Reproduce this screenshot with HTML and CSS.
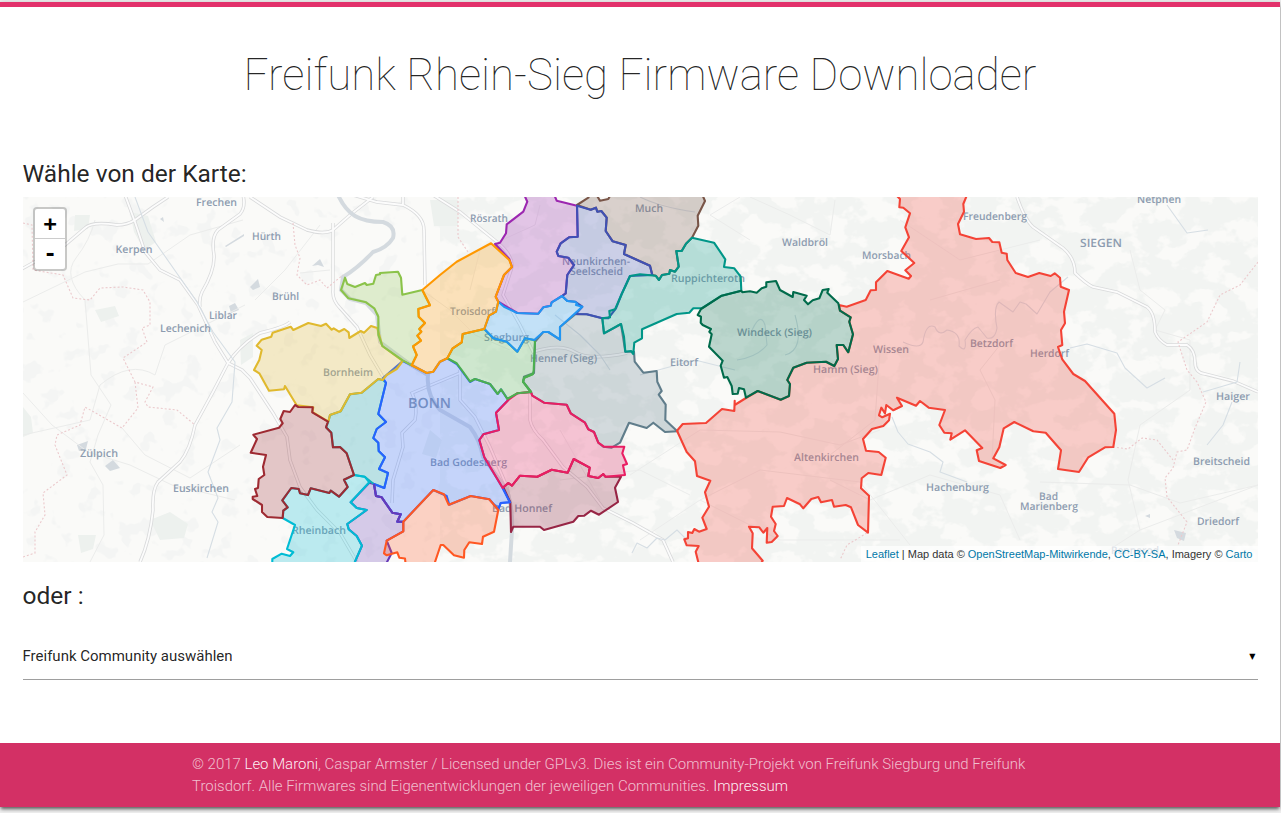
FILE: index.html
```html
<!DOCTYPE html>
<html lang="de">
<head>
<meta charset="utf-8">
<title>Freifunk Rhein-Sieg Firmware Downloader</title>
<link rel="stylesheet" href="styles.css">
</head>
<body>
<div class="page">
  <header class="header"><h1 class="title">Freifunk Rhein-Sieg Firmware Downloader</h1></header>
  <main class="main">
    <h2 class="heading">Wähle von der Karte:</h2>
    <div class="map">
      <svg class="map-canvas" viewBox="23 197 1235 365" width="1235" height="365">
        <defs>
          <filter id="woods" x="0" y="0" width="100%" height="100%" color-interpolation-filters="sRGB">
            <feTurbulence type="fractalNoise" baseFrequency="0.035 0.045" numOctaves="4" seed="8"/>
            <feColorMatrix values="0 0 0 0 .949  0 0 0 0 .957  0 0 0 0 .949  12 0 0 0 -5.1"/>
          </filter>
          <filter id="fields" x="0" y="0" width="100%" height="100%" color-interpolation-filters="sRGB">
            <feTurbulence type="fractalNoise" baseFrequency="0.05" numOctaves="3" seed="21"/>
            <feColorMatrix values="0 0 0 0 .957  0 0 0 0 .961  0 0 0 0 .957  14 0 0 0 -8.4"/>
          </filter>
          <g id="motorways">
            <path d="M125 195L135 222 145 252 160 270 180 280 198 305 215 342 228 363 242 370 250 378 273 413 287 437 290 460 300 487 317 510 340 533 357 562"/>
            <path d="M20 270L65 245 85 228Q92 221 117 225 127 225 135 220L153 207 168 197"/>
            <path d="M243 195Q246 207 240 214L218 230Q211 237 214 255 215 270 202 292 199 298 200 307"/>
            <path d="M290 322Q285 327 260 333 240 345 228 363L213 392 195 425Q190 450 180 462L158 482Q152 490 153 510 150 540 140 562"/>
            <path d="M250 197L280 217 307 230Q325 235 333 230L350 215 373 197"/>
            <path d="M333 223V290Q332 300 340 308L357 327 370 355 383 377"/>
            <path d="M353 195L377 202 403 205Q424 215 424 230L425 285M403 197V205M433 195L460 212 497 242Q513 255 512 267L503 295 520 325 533 352Q560 343 575 352T627 353"/>
            <path d="M460 373L412 393Q418 405 415 420L402 433 403 447 393 480 392 503"/>
            <path d="M460 370V400L475 417 490 447 507 487 512 513"/>
            <path d="M530 393V420Q532 430 543 440L563 467 587 487 603 508 633 523 663 540 673 562"/>
            <path d="M1017 197Q1025 220 1033 227L1063 248Q1075 258 1075 273 1085 283 1093 287L1117 292 1147 307Q1155 313 1155 332 1158 340 1167 345H1187Q1195 350 1195 362 1195 373 1205 374L1233 381 1258 392"/>
          </g>
          <g id="areas">
            <polygon class="c-purple2" points="369.3,482.7 350.7,502.3 356.7,508 366.7,510 347.3,524 348.7,529.3 356.7,536 362,545.7 354,564 386,564 391.7,553 386.7,540.7 403.3,531.3 403.3,521.7 397.3,521.7 400.7,514.3 392.3,512.7 381.7,497.3 376,496 374,484"/>
            <polygon class="c-alfter" points="328.3,421.7 330,415 340.7,411.3 350,394.3 361.7,392.7 378.3,379 383,380 386,382.7 378.3,414 386,422 376.7,429 373.3,438 378.3,442.7 378.7,451 385,457.3 379,469 388,473 384.3,488 373.3,483.7 364.7,476.7 354,475 346.7,453.3 340,447 333,447.3 331.3,432.7 326,427.3"/>
            <polygon class="c-blue" points="386,382.7 383,378 402.7,361 411.7,365.3 426.7,373 433.3,371.7 440,361.7 447.3,358.3 456.7,364 470,382 475,379 490,384 497.7,394 501,389.3 508.3,400 496,412.7 499,430 483.3,434.3 479.3,440 484.3,457.3 502.7,488 510,502.3 500.7,503 498.3,509.3 489.3,499.3 470.7,496 449.3,504.7 446.7,496 433.3,490 403.3,521.7 397.3,521.7 400.7,514.3 392.3,512.7 381.7,497.3 376,496 374,484 384.3,488 388,473 379,469 385,457.3 378.7,451 378.3,442.7 373.3,438 376.7,429 386,422 378.3,414"/>
            <polyline class="c-purple2 open" points="403.3,521.7 397.3,521.7 400.7,514.3 392.3,512.7 381.7,497.3 376,496 374,484"/>
            <polygon class="c-cyan" points="354,475 364.7,476.7 369.3,482.3 350.7,502.3 356.7,508 366.7,510 347.3,524 348.7,529.3 356.7,536 362,545.7 354,564 272.3,564 272.3,559 281.7,553.7 290,556 293.3,552.3 287,549 295,525 282.7,518 283.3,510.7 287.7,507.3 282.3,500.3 291.3,488 298.7,489 300,493.3 308,495 310.7,488.3 329.3,493 330.7,490.7 339,496.7 347.7,487 344,479.7"/>
            <polygon class="c-yellow" points="256.7,345.7 261.7,339.7 271.3,336.7 272.7,332.7 290.7,326.7 293.3,330 308.3,323 321,326 326,323.7 331.7,329.7 333.7,328.3 339,331.7 344.3,329 348.7,332.3 349.3,338 360.7,331 364,332.7 371,326 377.3,328 382.3,346 402.7,361 396.7,369 386.7,375 382.7,380 378.3,379 361.7,392.7 350,394.3 340.7,411.3 330,415 328.3,421.7 312.3,412 313.3,407.3 296.7,405.3 285,386 284,389.3 269,390.7 259.3,373.3 254,370 259.3,360 261.7,350"/>
            <polygon class="c-maroon" points="295,405 298.3,407 312.7,407.3 312.3,412.3 328,421.7 326,427.3 331.3,432.7 333,447.3 340,447 346.7,453.3 354,475 344,479.7 347.7,487 339,496.7 330.7,490.7 329.3,493 310.7,488.3 308,495 300,493.3 298.7,489 291.3,488 282.3,500.3 287.7,507.3 283.3,510.7 282.7,518 267.3,517 262,512 262,505 252.7,499 252.7,496.7 257.3,496 255,489 258,488 258.7,479 264.3,475 263,466.7 266,455 250.7,452.7 257,439 253.3,434.7 279,427.7 282.7,423.3 280.3,419 283.7,411 290,412"/>
            <polygon class="c-lime" points="345,277.7 347.3,284 355,287 365,283 366.7,285 373.3,283.7 376,275 380,274.3 380,273 398,271.7 401,277.7 402.3,294.7 422.3,290 430,305.3 418.3,309 418.7,316.7 425,323 419.3,329 421.3,331.7 417.3,335.7 421,340.7 413,346.3 416.7,355 411.7,365.3 402.7,360.3 382.3,346 378.3,335 378.3,316.7 374.3,308.3 366,302.3 348.3,298.3 341,290"/>
            <polygon class="c-purple" points="524.3,195 527.3,201.7 523.3,211.7 506.7,224.3 506,233.3 500,242.7 495,244 509.3,259 512,267 504,275 495.7,296.7 498.3,301.7 517.3,313 538.3,313.7 543.3,307.3 550.7,305.7 551.7,302.3 562,296 565.7,293.3 567.3,275 574,265 568.3,257.7 558.3,256 556.7,251.7 560.7,243.3 569,237.3 577.7,236.7 577,205.7 556.7,200.7 554.3,195"/>
            <polygon class="c-brown" points="577,205 588.3,197.7 590,194 596,194 600,200.7 608.3,199 611,194 702,194 705,201 697.7,215.7 698.3,225.7 692,237.7 686,243.7 681.7,251 676.3,251 678.7,266.7 675,271.7 670,270 669.3,273.7 662,275 659,280 655.7,275.7 652.3,275 650,265.7 624,254 625.7,245 612.7,241.3 605.7,231 606.7,217.7 601.3,211 597.3,211.7 596,207.7 590.7,209.7"/>
            <polygon class="c-slate" points="634,351.7 634.7,361.7 643.3,372.7 656.7,371 657.3,381.7 661.7,391 658.7,394.7 665.7,404.7 665.3,420 677.3,431.3 665,432 653.3,422.7 646.7,428 629,422.7 620,442.7 611.7,447.7 603.3,446.7 598.3,442.7 594,432 588.3,429.3 585,422.7 570.7,413.3 566.7,404.7 544,402.7 532.3,395.7 531,392 523,381.7 524,376.7 534,373 535,341.7 543.3,332 548.3,332 560,339.7 560,327 575.7,314 586.7,314.3 602.3,318.3 604,333.3 621,324 625.3,351.7"/>
            <polygon class="c-indigo" points="577,205.7 590.7,209.7 596,207.7 597.3,211.7 601.3,211 606.7,217.7 605.7,231 612.7,241.3 625.7,245 624,254 650,265.7 652.3,275 630,276 621.7,294 616,308.3 608.3,318.3 602.3,318.3 586.7,314.3 575.7,314 582.3,306.7 575,301.7 567.3,301 562,296 565.7,293.3 567.3,275 574,265 568.3,257.7 558.3,256 556.7,251.7 560.7,243.3 569,237.3 577.7,236.7"/>
            <polygon class="c-green" points="447.3,358.3 452.7,348.3 461.7,342.3 462.7,334 484.3,329 493.3,338.3 506.7,341.7 517.3,351.7 525,338.3 534,340 535,341.7 533.7,370 533,374 524.3,377.7 523,381.7 531,392 517.3,393.3 507.3,399 501,389.3 497.7,394 490,384 475,379 470,381.5 461.7,370 456.7,363.3"/>
            <polygon class="c-sky" points="484.3,329 489,315.7 496,311.7 498.3,301.7 504,306.7 517.3,313 538.3,313.7 543.3,307.3 550.7,305.7 551.7,302.3 562,296 567.3,301 575,301.7 577.3,303.7 576,305 582.3,306.7 560,327 560,339.7 548.3,332 543.3,332 534.3,340 525,338.3 517.3,351.7 506.7,341.7 493.3,338.3"/>
            <polygon class="c-teal" points="630,276 640,274.3 655.7,275.7 659,280 662,275 669.3,273.7 670,270 675,271.7 678.7,266.7 676.3,251 681.7,251 686,243.7 692,237.7 714,242.7 725.3,259.3 724,267 734.3,268.3 740.7,276.7 741.3,290.7 721.7,295.7 701.7,308.3 693.3,308.3 689.3,312.7 676.7,314 642,329.3 642,338.3 634.3,342.7 633.3,354 631,351 625.3,351.7 624,336.7 621,324 604,333.3 602.3,318.3 610,317.3 609.3,311 615,309.3 621.7,294"/>
            <polygon class="c-orange" points="422.3,290 440,275 456.7,261.7 491,243.3 509.3,260 512,267 504,275 495.7,296.7 498.3,301.7 496,311.7 489,315.7 484.3,329 462.7,334 461.7,342.3 452.7,348.3 447.3,358.3 440,361.7 433.3,371.7 426.7,373 411.7,365.3 416.7,355 413,346.3 421,340.7 417.3,335.7 421.3,331.7 419.3,329 425,323 418.7,316.7 418.3,309 430,305.3"/>
            <polygon class="c-wine" points="503.3,487.3 508.3,483 512,485.7 520,475.7 537.3,476.7 551.7,469.7 567.7,472.7 573.7,459 589.7,467.7 588.3,476 598.3,478 603.3,474 605.3,476.7 621,476.7 615,487.7 618,502 599,514.7 591,510.7 584.3,515.7 578.3,516 573.3,521.7 544,530 540,526.7 513.3,526.7 511,532 510.3,502.3"/>
            <polyline class="c-blue open" points="502.7,488 510,502.3 500.7,503 498.3,509.3"/>
            <polygon class="c-pink" points="502.7,488 484.3,457.3 479.3,440 483.3,434.3 499,430 496,412.7 508.3,400 517.3,393.3 531,392 532.3,395.7 544,402.7 566.7,404.7 570.7,413.3 585,422.7 588.3,429.3 594,432 598.3,442.7 604,446.7 624.3,446.7 622.3,453.3 627,464 623,465.3 625,475 605.3,476.7 603.3,474 598.3,478 588.3,476 589.7,467.7 573.7,459 567.7,472.7 551.7,469.7 537.3,476.7 520,475.7 512,485.7 508.3,483"/>
            <polyline class="c-green open" points="533,374 524.3,377.7 523,381.7 531,392 517.3,393.3 507.3,399"/>
            <polygon class="c-coral" points="433.3,490 444,494.3 448.7,504.7 470.7,496 489.3,499.3 498.3,510 494,531.7 483,536.7 482,544 469.3,542.3 464.3,550 464,557.7 454,555.3 443.3,545 440.7,545 434,565 405.7,565 405,558.5 399.3,557.7 397.3,552.3 386.7,555.3 384,553.3 386.7,540.7 403.3,531.3 403.3,521.7"/>
            <polygon class="c-red" points="896,195 900,199 899.3,207.3 903.3,207.7 910,213.3 905.3,227.3 909,237.3 901.3,251 914.3,263 905.3,270.3 911,276 908.7,278.7 887.3,271 876,282.3 876,290 870.7,290.3 865.7,300 846.7,306.7 839,305 840,310.7 850.7,317.3 849.3,321.7 853,334.3 848.3,352.3 843.3,345 836.7,345 838,359 834.3,366 826,361.7 806.7,362.7 793.3,367.7 787.3,380 790,384 789,396 780.7,399.7 757.7,391 746,398 734.7,405 734.7,400.7 734.3,411 722,409 706,423 682.7,424 677,430.7 686.7,452 695,461.3 697,476 710.3,480.7 705,492.3 709,506.7 702.3,517.7 706.7,529 699,531.7 694.3,529 692.3,533 688,532 688,538.3 684.3,539.3 686.7,545.3 698.7,546 695.7,551.7 699,565 760,565 762.7,560.7 752,548.3 752.7,533.3 749,526.7 759.3,527.3 763.3,532.7 767.3,528 766.7,542.7 771.7,542 777.7,536 774,531 775.7,524 771,516.7 772.7,506.7 784,506 787,498 800,504.3 803.3,508.3 811.3,499 818.3,497 821,502.3 832,500 834,506.7 845.7,505 851,507.3 858,525 868,532.7 869,495.7 861,488.3 861.7,478.3 868.3,473 881.3,475 885.7,457.7 878.7,452 866,450.7 863,439 872,429 883.3,426 889,420.3 890,413.7 882.3,417.3 879,415.3 881.3,407.7 885,413.3 886.3,405 893.3,410.3 902,406 897,397.7 916,405.7 920,401 928.7,407.7 945,410 939.3,425 944.3,432.7 951.7,433.3 950.3,439.7 965,430.3 982.3,448 976.7,450.3 979,461 1000.3,468 1005.7,465 993.3,458.3 999.3,447.3 1003.7,428.3 1014.3,422 1033.3,431.3 1045.7,432.7 1061,450.3 1058,469 1079,472 1088.3,457.3 1105,447.3 1113.3,447 1116,430 1114.3,413.7 1085,381 1073.3,374 1062.3,359.3 1058,347 1062.3,345 1061,330 1065,323.3 1064,311.7 1069,290 1060.7,286.7 1060,277.7 1054.7,273.3 1050.7,276 1039.3,273 1028,277 1015.7,273 1007.3,260 1006.7,253.7 1001.7,252.7 999.3,242.3 992.3,242 989,238 976,239 960,234.3 958,224 964,211.7 963.3,204 967,195"/>
            <polygon class="c-forest" points="741.3,290.7 742.3,292.3 750,291.3 756.7,292.7 761.7,288.3 766.3,286.7 766.3,282.3 776,281 780,290 792.7,297 793.3,292 806.7,295.7 804,300 808,304.3 812.7,300.3 819.3,298.3 822.7,290 828.7,289 827.3,292.7 838.3,303.3 840,310.7 850.7,317.3 849.3,321.7 853,334.3 848.3,352.3 843.3,345 836.7,345 838,359 834.3,366 826,361.7 806.7,362.7 793.3,367.7 787.3,380 790,384 789,396 780.7,399.7 757.7,391 746,397.7 744,389.3 739,388 737.7,393.7 732.7,394 731.7,386 727.3,377 724,377.7 720.7,365.7 722.7,360.7 709,346.7 711.7,334.3 709.3,331.7 711,329 702.7,325 700.7,322.7 701,316.7 697.7,315 701,309 721.7,295.7"/>
          </g>
        </defs>
        <rect class="land" x="23" y="197" width="1235" height="365"/>
        <rect x="23" y="197" width="420" height="365" filter="url(#fields)"/>
        <rect x="440" y="197" width="818" height="365" filter="url(#woods)"/>
        <path class="wood" d="M75 215l15 0-2 14-14 2zM130 212l18 4 8 26-12 8-10-18zM95 310l20-4 4 10-18 6zM23 407l8 10 2 16-10 4zM150 520l20-8 18 12-4 14-24 2zM240 340l13-7v24l-12 8zM78 535l18 0-3 14-12 4zM430 200h28v26h-24zM430 430l12 10-6 18-14-4z"/>
        <path class="water" d="M77 445l11-4-2 8-7 2zM105 466l8-6 7 8-10 3zM225 246l19-12v2l-18 11zM229 306l6-3 4 7-8 3zM250 287l8-8 2 8-7 3zM160 219l3-2 1 5zM312 266l8-7 4 8-6-2zM1174 530l12 3-2 8-7-3zM1145 516l5-2v4z"/>
        <g class="minor">
          <path d="M23 302L85 272 118 264 148 264 190 235 243 220M95 220Q90 240 76 258T85 300L91 375 111 405 98 435 90 462 103 485 104 535 90 562M23 393L52 425 88 452 130 465 172 485 235 500M23 435L90 420 100 385Q130 360 155 375L165 345 195 330 245 305M122 428L145 455 190 478 240 445M320 225L285 270 255 300M300 273L330 270M470 290L480 250 535 225 540 205M560 430L600 500M630 475L700 430 780 432 840 445 880 430M700 500L760 470 860 482 910 545M750 197L790 215 830 235 835 200M880 350L875 420 830 455M1000 345L980 370 995 400 992 460M1130 250L1140 290 1165 310 1155 330 1190 340 1190 390 1140 425 1128 480 1140 530 1090 562M1040 482L1130 485 1180 503 1258 485M1140 530L1258 485M560 480L640 470 690 495M640 540L700 500 780 540 900 540"/>
          <path d="M830 480L870 500 930 475 1000 495 1020 540M900 220L960 260 1040 240M930 300L1000 280M750 240L710 215 740 197M422 290L450 310 475 335 510 350"/>
        </g>
        <use href="#motorways" class="casing"/>
        <use href="#motorways" class="roadway"/>
        <path class="rhine" d="M338 195Q345 210 355 216T383 222Q396 226 393 238 387 248 373 252 358 268 343 277L341 290 350 299 366 303 377 315 380 342 411 365 428 375Q426 395 440 410L470 427Q480 440 483 457L507 490Q513 510 512 530L510 562"/>
        <path class="river" d="M135 197l13 35 35 50 14 20 16 30 22 30-3 40-15 26 3 12-12 32 10 26-6 14 6 10-11 36M903 342q17 8 20 0 3-20 12-15 4 10 12 3 14 2 12 16 8 8 6-6 7-12 13-13l9 11q8 2 10-10-4-20 2-26l14 10 7-10 6 2 11 10 13-22 18-15M1167 205l20 28 21-3M1070 348l17-4 30 9 8 15 22 20 18-10M1240 362l-3 20-34 10M1232 402l-9 23-16 20M892 417l6 15 10 12 22 8 13 10-3 10 27 10M632 553l5-10 10 5 10-10 8 2 12-10 10 10M640 197q20 10 55 15M750 335q10-25 15-10l2 20q-10 12-30 15M785 355q20-5 10-40M640 375l55-15 40 10M555 315l25 20 20 20 10 15"/>
        <path class="border" d="M23 223l9 2 1 45 30 5 10 23 17 2 10-12 23-1 20 3 7 12v23l-8 3 5 14-24 16 12 24 18 5-8 15 3 5 29 3 18 15M135 382l3 26-16 20-37-21-5 18-23 10-2 10 12 30-24 18 2 22-10 17v21l-12 4M293 223l2 22 5 13-3 17 10 10 13-5 7 8 16-13M1258 262l-18 23-20 10-13 27-29 20 9 28 10 12 9 20-11 26-8 22-10 2-4 16-8 10 2 19 20 25-9 23M1113 447l15 2 14-11 15 2 16 20M867 533l-20 12-7 15M458 197v40l10 15"/>
        <g class="labels">
          <text x="196" y="206" textLength="41" lengthAdjust="spacingAndGlyphs">Frechen</text><text x="115.500" y="253" textLength="37" lengthAdjust="spacingAndGlyphs">Kerpen</text>
          <text x="252" y="240" textLength="29" lengthAdjust="spacingAndGlyphs">Hürth</text><text x="272" y="300" textLength="27" lengthAdjust="spacingAndGlyphs">Brühl</text>
          <text x="209" y="319" textLength="28" lengthAdjust="spacingAndGlyphs">Liblar</text><text x="160" y="332" textLength="51" lengthAdjust="spacingAndGlyphs">Lechenich</text>
          <text x="80" y="457" textLength="38" lengthAdjust="spacingAndGlyphs">Zülpich</text><text x="173" y="492" textLength="56" lengthAdjust="spacingAndGlyphs">Euskirchen</text>
          <text x="323" y="375.500" textLength="50" lengthAdjust="spacingAndGlyphs">Bornheim</text><text class="city-big" x="408" y="408" textLength="43" lengthAdjust="spacingAndGlyphs">BONN</text>
          <text x="470" y="222" textLength="38" lengthAdjust="spacingAndGlyphs">Rösrath</text><text x="450" y="315" textLength="45" lengthAdjust="spacingAndGlyphs">Troisdorf</text>
          <text x="484" y="341" textLength="45" lengthAdjust="spacingAndGlyphs">Siegburg</text><text x="530" y="361.500" textLength="67" lengthAdjust="spacingAndGlyphs">Hennef (Sieg)</text>
          <text x="562" y="265" textLength="68" lengthAdjust="spacingAndGlyphs">Neunkirchen-</text><text x="570" y="275" textLength="53" lengthAdjust="spacingAndGlyphs">Seelscheid</text>
          <text x="635" y="212" textLength="28" lengthAdjust="spacingAndGlyphs">Much</text><text x="671" y="282" textLength="74" lengthAdjust="spacingAndGlyphs">Ruppichteroth</text>
          <text x="782" y="246" textLength="46" lengthAdjust="spacingAndGlyphs">Waldbröl</text><text x="862" y="259" textLength="49" lengthAdjust="spacingAndGlyphs">Morsbach</text>
          <text x="737" y="336" textLength="75" lengthAdjust="spacingAndGlyphs">Windeck (Sieg)</text><text x="670" y="366" textLength="28" lengthAdjust="spacingAndGlyphs">Eitorf</text>
          <text x="813" y="373" textLength="65" lengthAdjust="spacingAndGlyphs">Hamm (Sieg)</text><text x="873" y="352.500" textLength="36" lengthAdjust="spacingAndGlyphs">Wissen</text>
          <text x="970" y="346.500" textLength="43" lengthAdjust="spacingAndGlyphs">Betzdorf</text><text x="1030" y="357" textLength="39" lengthAdjust="spacingAndGlyphs">Herdorf</text>
          <text x="963" y="219.500" textLength="64" lengthAdjust="spacingAndGlyphs">Freudenberg</text><text class="city" x="1080" y="247" textLength="42" lengthAdjust="spacingAndGlyphs">SIEGEN</text>
          <text x="1137" y="203" textLength="44" lengthAdjust="spacingAndGlyphs">Netphen</text><text x="1216" y="400" textLength="34" lengthAdjust="spacingAndGlyphs">Haiger</text>
          <text x="1193" y="465" textLength="57" lengthAdjust="spacingAndGlyphs">Breitscheid</text><text x="1197" y="525" textLength="42" lengthAdjust="spacingAndGlyphs">Driedorf</text>
          <text x="926" y="491" textLength="63" lengthAdjust="spacingAndGlyphs">Hachenburg</text><text x="1039" y="500" textLength="19" lengthAdjust="spacingAndGlyphs">Bad</text>
          <text x="1020" y="510" textLength="58" lengthAdjust="spacingAndGlyphs">Marienberg</text><text x="794" y="461" textLength="65" lengthAdjust="spacingAndGlyphs">Altenkirchen</text>
          <text x="430" y="465.500" textLength="77" lengthAdjust="spacingAndGlyphs">Bad Godesberg</text><text x="492" y="511.500" textLength="60" lengthAdjust="spacingAndGlyphs">Bad Honnef</text>
          <text x="292" y="533.500" textLength="54" lengthAdjust="spacingAndGlyphs">Rheinbach</text><text x="1111" y="554" textLength="48" lengthAdjust="spacingAndGlyphs">Rennerod</text>
        </g>
        <use href="#areas" class="areas"/>
      </svg>
      <div class="zoom-control"><a class="zoom-btn">+</a><a class="zoom-btn">-</a></div>
      <div class="attribution"><a>Leaflet</a> | Map data © <a>OpenStreetMap-Mitwirkende</a>, <a>CC-BY-SA</a>, Imagery © <a>Carto</a></div>
    </div>
    <h2 class="heading heading-or">oder :</h2>
    <div class="select"><span class="select-label">Freifunk Community auswählen</span><span class="caret">▼</span></div>
  </main>
  <footer class="footer"><p class="footer-text">© 2017 <a>Leo Maroni</a>, Caspar Armster / Licensed under GPLv3. Dies ist ein Community-Projekt von Freifunk Siegburg und Freifunk Troisdorf. Alle Firmwares sind Eigenentwicklungen der jeweiligen Communities. <a>Impressum</a></p></footer>
</div>
</body>
</html>
```
FILE: styles.css
```css
* { box-sizing: border-box; }
html { overflow: hidden; height: 813px; background: #f0f0f0; }
body { margin: 0; padding-top: 2px; height: 813px; font-family: Roboto, "Liberation Sans", sans-serif; color: rgba(0,0,0,.87); }
.page { display: flex; flex-direction: column; width: 1280px; height: 805px; background: #fff; border-top: 5px solid #e2316b; box-shadow: 0 3px 3px -1px rgba(0,0,0,.5), 0 1px 6px rgba(0,0,0,.25); }
.header { display: flex; justify-content: center; padding-top: 43px; }
.title { margin: 0; font-size: 43.8px; line-height: 50px; font-weight: 100; white-space: nowrap; }
.main { padding: 60px 22px 0 23px; flex: 1; }
.heading { margin: 0 0 0 -.5px; font-size: 24.5px; line-height: 28px; font-weight: 400; }
.map { position: relative; width: 1235px; height: 365px; margin-top: 9px; overflow: hidden; }
.map-canvas { display: block; }
.land { fill: #fafaf8; }
.wood { fill: #edf1ee; }
.water { fill: #d4dadf; }
.minor { fill: none; stroke: #ebeceb; stroke-width: 1; }
.casing { fill: none; stroke: #d9dadb; stroke-width: 3.4; }
.roadway { fill: none; stroke: #fcfcfc; stroke-width: 1.8; }
.rhine { fill: none; stroke: #d4dadf; stroke-width: 4; }
.river { fill: none; stroke: #d6dee4; stroke-width: 1.1; stroke-linejoin: round; }
.border { fill: none; stroke: #ebc9cc; stroke-width: 1.1; stroke-dasharray: 2 2; }
.labels { font: 600 10.5px "Open Sans", sans-serif; fill: #8d9cb0; text-rendering: geometricPrecision; }
.labels .city { font-size: 11.5px; }
.labels .city-big { font-size: 14px; }
.areas { stroke-width: 2.1; stroke-linejoin: round; fill-opacity: .25; }
.c-purple2 { fill: #673ab7; stroke: #673ab7; }
.c-alfter { fill: #0097a7; stroke: #12b0b8; }
.c-blue { fill: #2962ff; stroke: #2962ff; }
.c-cyan { fill: #00bcd4; stroke: #00bcd4; }
.c-yellow { fill: #e0b92e; stroke: #e0b92e; }
.c-maroon { fill: #9e2a32; stroke: #9e2a32; }
.c-lime { fill: #8bc34a; stroke: #8bc34a; }
.c-purple { fill: #9c27b0; stroke: #9c27b0; }
.c-brown { fill: #795548; stroke: #795548; }
.c-slate { fill: #607d8b; stroke: #607d8b; }
.c-indigo { fill: #3f51b5; stroke: #3f51b5; }
.c-green { fill: #4caf50; stroke: #4caf50; }
.c-sky { fill: #2196f3; stroke: #2196f3; }
.c-teal { fill: #009688; stroke: #009688; }
.c-orange { fill: #ff9800; stroke: #ff9800; }
.c-wine { fill: #972545; stroke: #972545; }
.c-pink { fill: #e91e63; stroke: #e91e63; }
.c-coral { fill: #ff5722; stroke: #ff5722; }
.c-red { fill: #f44336; stroke: #f44336; }
.c-forest { fill: #006b4b; stroke: #006b4b; }
.open { fill: none; }
.zoom-control { position: absolute; left: 10px; top: 10px; width: 34px; border: 2px solid rgba(0,0,0,.2); border-radius: 4px; background-clip: padding-box; background-color: #fff; }
.zoom-btn { display: block; height: 30px; text-align: center; color: #000; font: bold 22px/30px "DejaVu Sans Mono", monospace; }
.zoom-btn:first-child { border-bottom: 1px solid #ccc; }
.attribution { position: absolute; right: 0; bottom: 0; padding: 0 5.5px 0 5px; font: 11px/16.5px "Liberation Sans", Arial, sans-serif; color: #333; background: rgba(255,255,255,.7); white-space: nowrap; }
.attribution a { color: #0078a8; }
.heading-or { margin-top: 20px; }
.select { display: flex; justify-content: space-between; align-items: center; height: 48px; margin-top: 22px; border-bottom: 1px solid #9e9e9e; font-size: 15px; }
.select-label { margin-left: -.5px; }
.caret { font-size: 8px; color: #000; padding: 2px 2.5px 0 0; font-family: "DejaVu Sans", sans-serif; }
.footer { height: 64px; background: #d33065; }
.footer-text { width: 896px; margin: 0 auto; padding-top: 10px; font-size: 14.98px; line-height: 22px; font-weight: 300; color: rgba(255,255,255,.7); }
.footer-text a { color: rgba(255,255,255,.95); }
```
